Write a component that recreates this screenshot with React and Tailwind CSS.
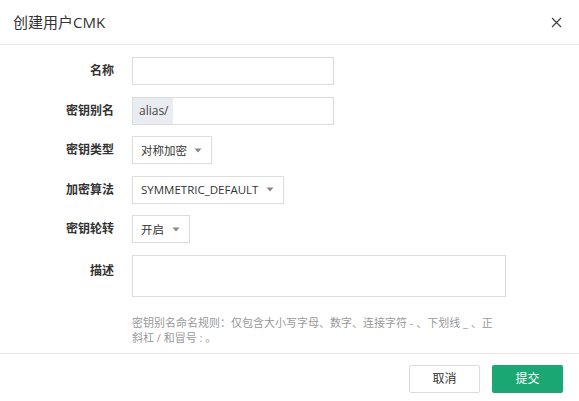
const font = { fontFamily: '"Open Sans", "Noto Sans CJK SC", sans-serif' };

function Caret() {
  return (
    <svg width="8" height="5" viewBox="0 0 8 5" className="shrink-0">
      <path d="M0.5 0.5 L7.5 0.5 L4 4.5 Z" fill="#888" />
    </svg>
  );
}

function Row({ label, top, children }) {
  return (
    <div className={`flex ${top ? "items-start" : "items-center"}`}>
      <div
        className={`w-[114px] shrink-0 text-right text-[12px] font-semibold text-[#333] ${
          top ? "pt-[7px]" : ""
        }`}
      >
        {label}
      </div>
      <div className="ml-[18px]">{children}</div>
    </div>
  );
}

function Select({ value, width }) {
  return (
    <div
      className={`flex h-[28px] items-center border border-[#dcdcdc] bg-white pl-[8px] pr-[9px] text-[11.5px] text-[#333] ${width}`}
    >
      <span>{value}</span>
      <span className="ml-auto">
        <Caret />
      </span>
    </div>
  );
}

export default function App() {
  return (
    <div className="h-[401px] w-[579px] bg-white" style={font}>
      <div className="flex h-[45px] items-center justify-between border-b border-[#e8e8e8] pl-[13px] pr-[17px]">
        <span className="text-[15px] text-[#333]">创建用户CMK</span>
        <svg width="11" height="11" viewBox="0 0 11 11">
          <path d="M1 1 L10 10 M10 1 L1 10" stroke="#444" strokeWidth="1.3" />
        </svg>
      </div>

      <div className="flex h-[308px] flex-col gap-[11.6px] pt-[12px]">
        <Row label="名称">
          <div className="h-[28px] w-[202px] border border-[#dcdcdc] bg-white" />
        </Row>
        <Row label="密钥别名">
          <div className="flex h-[28px] w-[202px] border border-[#dcdcdc] bg-white">
            <div className="flex w-[40px] items-center bg-[#e9edf2] pl-[6px] text-[12px] text-[#444]">
              alias/
            </div>
          </div>
        </Row>
        <Row label="密钥类型">
          <Select value="对称加密" width="w-[80px]" />
        </Row>
        <Row label="加密算法">
          <Select value="SYMMETRIC_DEFAULT" width="w-[152px]" />
        </Row>
        <Row label="密钥轮转">
          <Select value="开启" width="w-[58px]" />
        </Row>
        <Row label="描述" top>
          <div className="h-[42px] w-[374px] border border-[#dcdcdc] bg-white" />
          <p className="mt-[18px] w-[366px] text-[11px] leading-[15px] text-[#999]">
            密钥别名命名规则：仅包含大小写字母、数字、连接字符 - 、下划线 _ 、正斜杠 / 和冒号 : 。
          </p>
        </Row>
      </div>

      <div className="flex h-[48px] items-start justify-end gap-[12px] border-t border-[#e8e8e8] pr-[16px] pt-[11px]">
        <button className="h-[28px] w-[71px] rounded-[2px] border border-[#dcdcdc] bg-white text-[12px] text-[#333]">
          取消
        </button>
        <button className="h-[28px] w-[71px] rounded-[2px] bg-[#1aa774] text-[12px] text-white">
          提交
        </button>
      </div>
    </div>
  );
}
